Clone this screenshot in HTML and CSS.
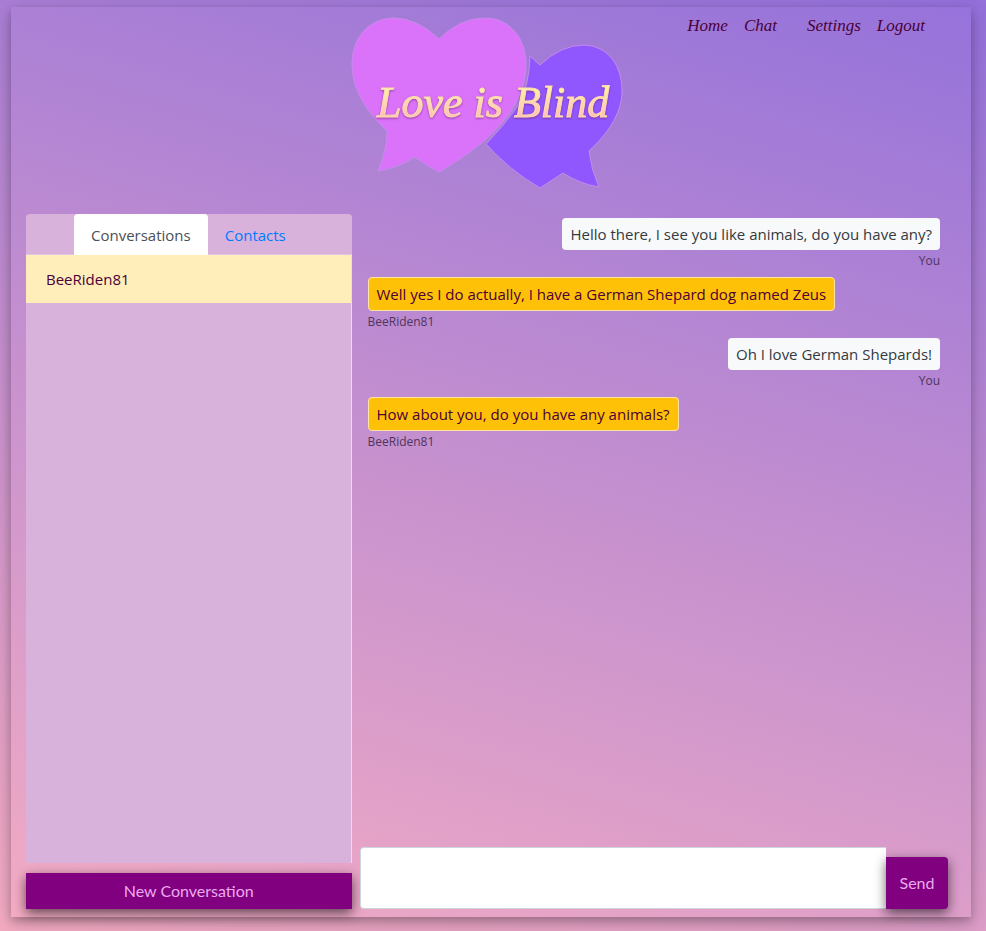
FILE: index.html
```html
<!DOCTYPE html>
<html lang="en">
<head>
<meta charset="utf-8">
<meta name="viewport" content="width=device-width, initial-scale=1">
<title>Love is Blind</title>
<link rel="stylesheet" href="styles.css">
</head>
<body>
<div class="app">
  <header class="header">
    <svg class="logo" viewBox="0 0 276 176" role="img" aria-label="Love is Blind">
      <defs>
        <linearGradient id="lettering" x1="0" y1="0" x2="0" y2="1">
          <stop offset="0.2" stop-color="#fff3a6"/>
          <stop offset="0.85" stop-color="#ffb9bd"/>
        </linearGradient>
      </defs>
      <path class="heart heart-blue" d="M178 43 L188 52 Q209 32 232 32 C256 33 270 52 270 78 C270 102 254 122 237 138 Q239 156 247 174 Q228 171 211 160 L188 175 Q156 156 134 131 Q151 114 165 94 Q177 76 178 43Z"/>
      <path class="heart heart-pink" d="M87 26 Q108 5 133 5 C159 5 174 27 174 51 C174 97 134 132 87 159 Q75 153 63 144 Q46 155 26 158 Q35 137 35 118 C17 101 0 79 0 51 C0 25 17 5 42 5 Q65 5 87 26Z"/>
      <text class="lettering" x="25" y="104" fill="url(#lettering)">Love is Blind</text>
    </svg>
    <nav class="nav">
      <a href="#">Home</a>
      <a class="nav-chat" href="#">Chat</a>
      <a href="#">Settings</a>
      <a href="#">Logout</a>
    </nav>
  </header>
  <main class="main">
    <aside class="sidebar">
      <div class="tabs" role="tablist">
        <a class="tab active" role="tab" aria-selected="true" href="#">Conversations</a>
        <a class="tab" role="tab" aria-selected="false" href="#">Contacts</a>
      </div>
      <div class="conversations">
        <a class="conversation" href="#">BeeRiden81</a>
      </div>
      <button class="button new-conversation" type="button">New Conversation</button>
    </aside>
    <section class="chat">
      <div class="messages">
        <div class="message mine"><p class="bubble">Hello there, I see you like animals, do you have any?</p><small>You</small></div>
        <div class="message"><p class="bubble">Well yes I do actually, I have a German Shepard dog named Zeus</p><small>BeeRiden81</small></div>
        <div class="message mine"><p class="bubble">Oh I love German Shepards!</p><small>You</small></div>
        <div class="message"><p class="bubble">How about you, do you have any animals?</p><small>BeeRiden81</small></div>
      </div>
      <form class="composer">
        <textarea aria-label="Message"></textarea>
        <button class="button send" type="button">Send</button>
      </form>
    </section>
  </main>
</div>
</body>
</html>
```
FILE: styles.css
```css
* { box-sizing: border-box; }

body {
  margin: 0;
  min-height: 100vh;
  display: flex;
  padding: 7px 15px 14px 11px;
  background: linear-gradient(196deg, #9370db, #f4abc2);
  color: #4b0037;
  font: 15px/24px "Open Sans", sans-serif;
}

a { color: inherit; text-decoration: none; }

.app {
  flex: 1;
  display: flex;
  flex-direction: column;
  padding: 0 15px 8px;
  background: rgba(255, 255, 255, 0.02);
  box-shadow: 0 4px 8px rgba(0, 0, 0, 0.2), 0 6px 20px rgba(0, 0, 0, 0.19);
}

.header {
  display: grid;
  grid-template-columns: 35% 30% 35%;
  height: 207px;
}

.logo {
  grid-column: 2;
  width: 276px;
  height: 176px;
  margin: 6px 0 0;
  overflow: visible;
}

.heart { stroke: #c58bea; stroke-width: 1; }
.heart-pink { fill: #db73fa; }
.heart-blue { fill: #9157ff; }

.lettering {
  font: italic 44px "Liberation Serif", serif;
  stroke: #ffdcae;
  stroke-width: 1;
  filter: drop-shadow(0 1px 1px rgba(110, 30, 110, 0.6));
}

.nav {
  grid-column: 3;
  justify-self: end;
  display: flex;
  gap: 16px;
  padding: 7px 31px 0 0;
  font: italic 17px/24px "Liberation Serif", serif;
}

.nav-chat { margin-right: 14px; }

.main {
  flex: 1;
  display: grid;
  grid-template-columns: 35% 65%;
}

.sidebar { display: flex; flex-direction: column; }

.tabs {
  display: flex;
  padding-left: 48px;
  border-radius: 4px 4px 0 0;
  background: #d8b2da;
  border-bottom: 1px solid #dec6e2;
}

.tab {
  padding: 9px 17px 7px;
  border-radius: 4px 4px 0 0;
  color: #007bff;
}

.tab.active { background: #fff; color: #495057; margin-bottom: -1px; }

.conversations {
  flex: 1;
  background: #d8b2da;
  border-right: 1px solid #dee2e6;
}

.conversation {
  display: block;
  padding: 12px 20px;
  background: #ffeeba;
}

.button {
  border: 0;
  background: purple;
  color: #eeaaee;
  font: 16px/24px Lato, sans-serif;
  box-shadow: 0 4px 12px rgba(0, 0, 0, 0.6);
  cursor: pointer;
}

.new-conversation { margin-top: 10px; padding: 6px 12px; }

.chat { display: flex; flex-direction: column; padding: 4px 8px 0; }

.messages { flex: 1; padding: 0 8px; }

.message {
  display: flex;
  flex-direction: column;
  align-items: flex-start;
  margin-bottom: 6px;
}

.bubble {
  margin: 0;
  padding: 4px 8px;
  border: 1px solid #ffe4a8;
  border-radius: 4px;
  background: #ffc107;
}

.message small { font-size: 12px; line-height: 21px; color: #4d3560; }

.mine { align-items: flex-end; }
.mine .bubble { border: 0; background: #f8f9fa; color: #343a40; }

.composer { display: flex; align-items: flex-end; }

.composer textarea {
  flex: 1;
  height: 62px;
  padding: 6px 12px;
  border: 1px solid #ced4da;
  border-right: 0;
  border-radius: 4px 0 0 4px;
  background: #fff;
  font: inherit;
  resize: none;
}

.send { width: 62px; height: 52px; border-radius: 0 4px 4px 0; }
```
